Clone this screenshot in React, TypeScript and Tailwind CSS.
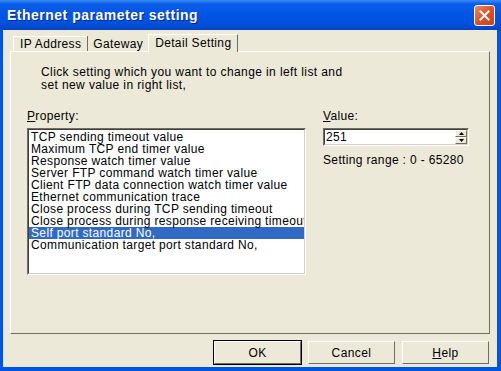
import React from "react";

const items = [
  "TCP sending timeout value",
  "Maximum TCP end timer value",
  "Response watch timer value",
  "Server FTP command watch timer value",
  "Client FTP data connection watch timer value",
  "Ethernet communication trace",
  "Close process during TCP sending timeout",
  "Close process during response receiving timeout",
  "Self port standard No,",
  "Communication target port standard No,",
];

function ClassicButton({ children, isDefault }: { children: React.ReactNode; isDefault?: boolean }) {
  return (
    <div className={isDefault ? "border border-black" : "border border-transparent"}>
      <div className="w-[87px] h-[23px] border border-t-white border-l-white border-r-[#716f64] border-b-[#716f64] bg-[#ece9d8] flex items-center justify-center text-[12px] tracking-[0.4px] text-black">
        {children}
      </div>
    </div>
  );
}

export default function App() {
  const selected = 8;
  return (
    <div
      className="w-[501px] h-[371px] bg-[#0054e3] flex flex-col overflow-hidden select-none"
      style={{ fontFamily: '"Liberation Sans", Arial, sans-serif' }}
    >
      {/* Title bar */}
      <div className="h-[30px] shrink-0 flex items-center justify-between pl-[7px] pr-[6px] bg-[linear-gradient(to_bottom,#3b8cf5_0px,#0a5de8_4px,#0055e5_15px,#0050dd_24px,#0043c0_30px)]">
        <span className="text-white font-bold text-[14px] tracking-[0.5px] [text-shadow:1px_1px_0_#0a2a8a]">
          Ethernet parameter setting
        </span>
        <div className="w-[21px] h-[21px] rounded-[3px] border border-white bg-[linear-gradient(135deg,#f08a6a,#e0502a_50%,#c8401e)] flex items-center justify-center">
          <svg width="11" height="11" viewBox="0 0 11 11">
            <path d="M1.5 1.5 L9.5 9.5 M9.5 1.5 L1.5 9.5" stroke="white" strokeWidth="2" strokeLinecap="square" />
          </svg>
        </div>
      </div>

      {/* Body */}
      <div className="flex-1 ml-[3px] mr-[4px] mb-[4px] bg-[#ece9d8] flex flex-col px-[7px] pt-[3px] tracking-[0.35px]">
        {/* Tabs */}
        <div className="flex items-end h-[18px] pl-[3px] text-[12px] text-black">
          <div className="h-[15px] flex items-center px-[6px] border-l border-t border-l-white border-t-white">
            IP Address
          </div>
          <div className="h-[15px] flex items-center px-[5px] border-l border-l-[#716f64]">Gateway</div>
          <div className="h-[18px] mb-[-1px] relative z-10 bg-[#ece9d8] flex items-center px-[6px] pb-[2px] border-l border-t border-r border-l-white border-t-white border-r-[#716f64]">
            Detail Setting
          </div>
        </div>

        {/* Panel */}
        <div className="h-[283px] border border-t-white border-l-white border-r-[#716f64] border-b-[#716f64] flex flex-col px-[16px]">
          <div className="pl-[14px] pt-[14px] text-[12px] leading-[12.5px] text-black tracking-[0.4px]">
            <div>Click setting which you want to change in left list and</div>
            <div>set new value in right list,</div>
          </div>
          <div className="flex mt-[19px]">
            <div className="flex flex-col">
              <div className="text-[12px] leading-[12px] text-black h-[18px]">
                <span className="underline">P</span>roperty:
              </div>
              <div className="w-[279px] h-[147px] bg-white border border-t-[#716f64] border-l-[#716f64] border-r-white border-b-white">
                <div className="w-full h-full border border-t-[#404040] border-l-[#404040] border-r-[#d4d0c8] border-b-[#d4d0c8] overflow-hidden pt-[1px]">
                  {items.map((it, i) => (
                    <div
                      key={it}
                      className={
                        "h-[12px] leading-[12px] text-[12px] pl-[2px] whitespace-nowrap " +
                        (i === selected ? "bg-[#316ac5] text-white" : "text-black")
                      }
                    >
                      {it}
                    </div>
                  ))}
                </div>
              </div>
            </div>
            <div className="flex flex-col ml-[17px]">
              <div className="text-[12px] leading-[12px] text-black h-[18px]">
                <span className="underline">V</span>alue:
              </div>
              <div className="w-[146px] h-[18px] bg-white border border-t-[#716f64] border-l-[#716f64] border-r-white border-b-white flex">
                <div className="flex-1 border border-t-[#404040] border-l-[#404040] border-r-[#d4d0c8] border-b-[#d4d0c8] flex items-center text-[12px] text-black pl-[1px] leading-[12px]">
                  251
                  <div className="ml-auto w-[12px] h-full flex flex-col">
                    <div className="flex-1 bg-[#ece9d8] border border-t-white border-l-white border-r-[#716f64] border-b-[#716f64] flex items-center justify-center">
                      <svg width="5" height="3" viewBox="0 0 5 3"><path d="M2.5 0 L5 3 L0 3 Z" fill="black" /></svg>
                    </div>
                    <div className="flex-1 bg-[#ece9d8] border border-t-white border-l-white border-r-[#716f64] border-b-[#716f64] flex items-center justify-center">
                      <svg width="5" height="3" viewBox="0 0 5 3"><path d="M0 0 L5 0 L2.5 3 Z" fill="black" /></svg>
                    </div>
                  </div>
                </div>
              </div>
              <div className="mt-[8px] text-[12px] leading-[12px] text-black">Setting range : 0 - 65280</div>
            </div>
          </div>
        </div>

        {/* Buttons */}
        <div className="flex justify-end gap-[5px] mt-[6px] pr-0">
          <ClassicButton isDefault>OK</ClassicButton>
          <ClassicButton>Cancel</ClassicButton>
          <ClassicButton>
            <span className="underline">H</span>elp
          </ClassicButton>
        </div>
      </div>
    </div>
  );
}
